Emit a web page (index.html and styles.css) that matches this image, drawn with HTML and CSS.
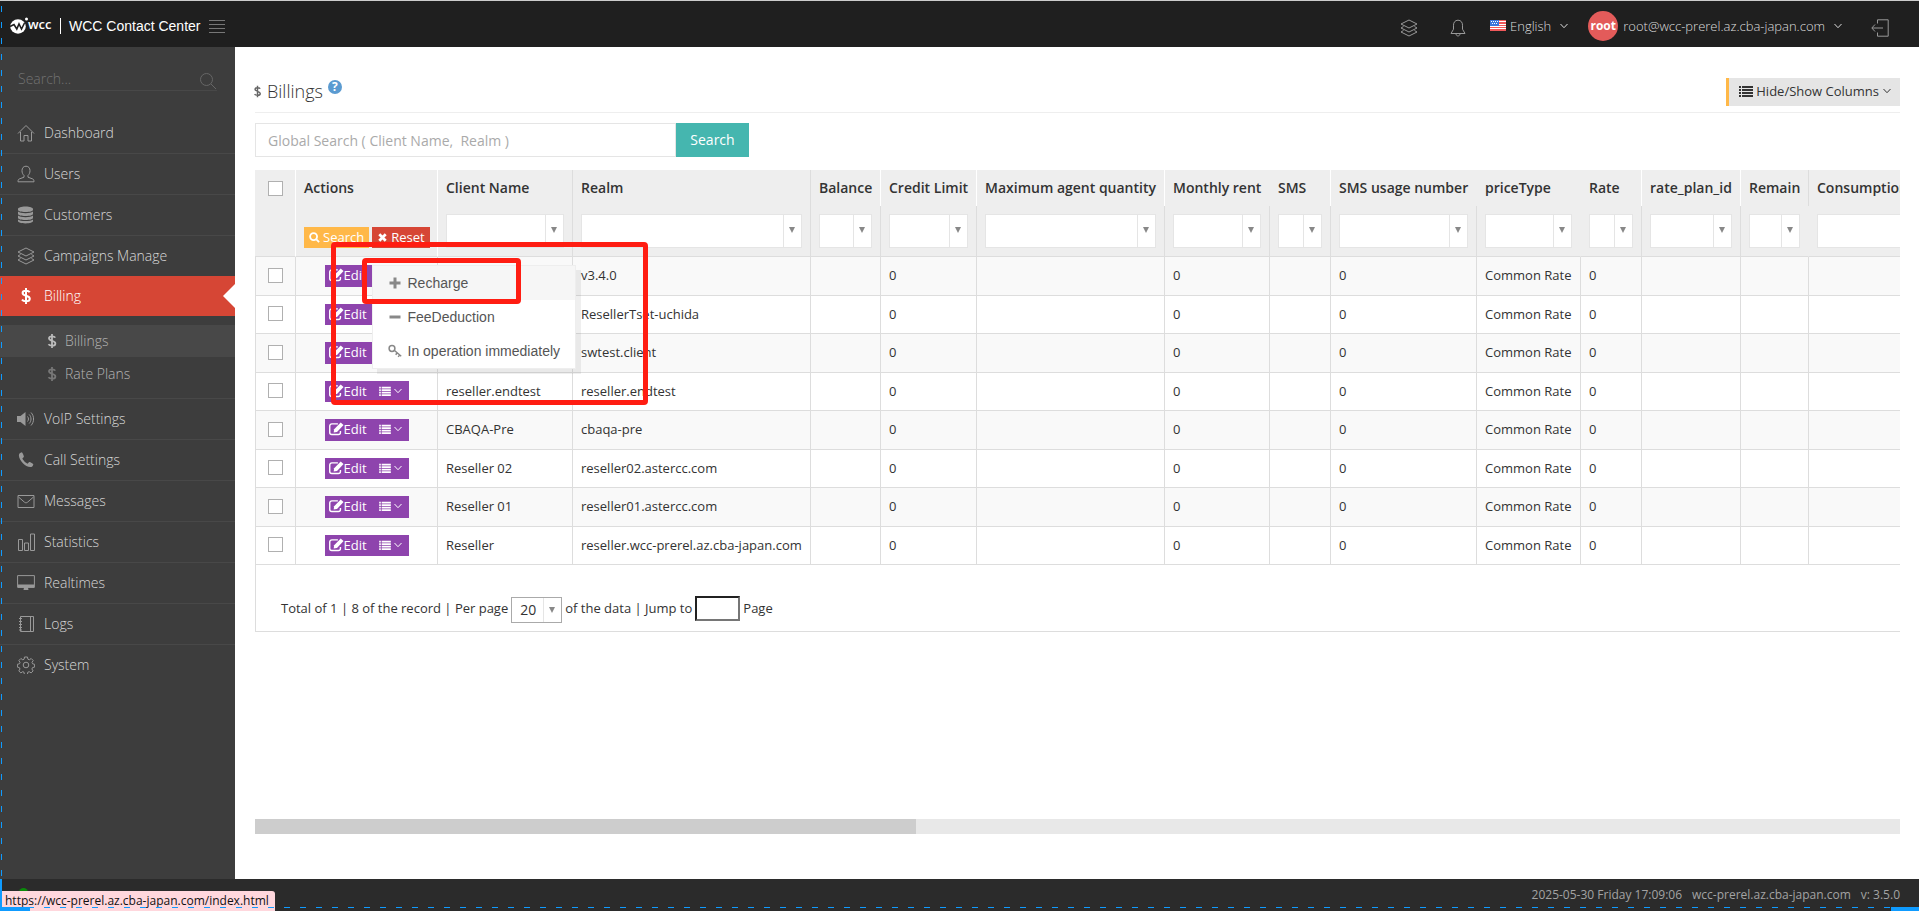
FILE: index.html
```html
<!DOCTYPE html>
<html lang="en">
<head>
  <meta charset="UTF-8">
  <meta name="viewport" content="width=device-width, initial-scale=1.0">
  <title>WCC Contact Center</title>
  <link rel="stylesheet" href="styles.css">
</head>
<body>
  <!-- icon set -->
  <svg class="icon-defs" aria-hidden="true">
    <symbol id="i-home" viewBox="0 0 18 18"><path class="line" d="M1 9.500 9 1.500l8 8M3.500 8v9h3.500v-5.500h4V17h3.500V8"/></symbol>
    <symbol id="i-user" viewBox="0 0 18 18"><path class="line" d="M9 1.200c-2.600 0-4 1.900-4 4.500 0 2 .8 3.700 2 4.700v1.800L2.200 14c-.9.400-1.200 1.200-1.200 2.800h16c0-1.600-.3-2.400-1.200-2.800L11 12.200v-1.800c1.200-1 2-2.700 2-4.700 0-2.600-1.400-4.500-4-4.500z"/></symbol>
    <symbol id="i-db" viewBox="0 0 18 18"><path d="M1 3c0-1.300 3-2.500 7.500-2.500S16 1.700 16 3v.8c0 1.300-3 2.300-7.500 2.300S1 5.100 1 3.800zM1 5.600c1.500 1.100 4 1.600 7.500 1.600s6-.5 7.500-1.600v2.200c0 1.300-3 2.300-7.500 2.300S1 9.100 1 7.800zM1 9.600c1.500 1.100 4 1.600 7.500 1.600s6-.5 7.500-1.600v2.200c0 1.300-3 2.300-7.500 2.300S1 13.100 1 11.800zM1 13.500c1.500 1.100 4 1.600 7.500 1.600s6-.5 7.500-1.600v1.600c0 1.300-3 2.400-7.500 2.400S1 16.400 1 15.100z"/></symbol>
    <symbol id="i-layers" viewBox="0 0 18 18"><path class="line" d="M9 1 1 5l8 4 8-4zM3.500 7.500 1 9l8 4 8-4-2.500-1.500M3.500 11.500 1 13l8 4 8-4-2.500-1.500"/></symbol>
    <symbol id="i-dollar" viewBox="0 0 18 18"><path class="thick" d="M9 1v16M12.700 5.200C12 4 10.700 3.700 9 3.700c-2.100 0-3.400.9-3.400 2.300 0 3.600 7.200 1.900 7.200 5.700 0 1.600-1.500 2.600-3.800 2.600-1.800 0-3.200-.5-4-1.600"/></symbol>
    <symbol id="i-sound" viewBox="0 0 18 18"><path d="M0 6h3.500L8.500 2v14l-5-4H0z"/><path class="line" d="M10.500 6.500c1.300 1.400 1.300 3.600 0 5M12.200 4.500c2.400 2.500 2.400 6.500 0 9M14 2.500c3.400 3.600 3.400 9.400 0 13"/></symbol>
    <symbol id="i-phone" viewBox="0 0 18 18"><path d="M4.700 1.300c-1.500.3-2.800 1.500-2.800 3.300 0 2.300 2 5.600 4 7.600s5 3.800 7.400 3.800c1.600 0 2.700-1 3-2.600 0-.5-3.400-2.400-3.900-2.300-.6.100-1.300 1.700-2 1.600-1.300-.3-4.800-3.900-5-5.100-.1-.6 1.400-1.200 1.500-1.900.1-.6-1.500-4.400-2.200-4.400z"/></symbol>
    <symbol id="i-mail" viewBox="0 0 18 18"><path class="line" d="M1 3.500h16v12H1zM1.500 5 7.500 10.200c1 .8 2 .8 3 0L16.500 5"/></symbol>
    <symbol id="i-stats" viewBox="0 0 18 18"><path class="line" d="M1.500 6.500h4v11h-4zM7.500 10h4v7.500h-4zM13.500 1h4v16.500h-4z"/></symbol>
    <symbol id="i-screen" viewBox="0 0 18 18"><path class="line" d="M.6 1.600h16.800v11.800H.6z"/><path d="M1 10.500h16v3H1zM7 13.500h4l.5 2.500H6.500z"/></symbol>
    <symbol id="i-book" viewBox="0 0 18 18"><path class="line" d="M3.500 1.500h13v15h-13zM13.500 1.500v15M2 3.500h3M2 6.500h3M2 9.500h3M2 12.500h3M2 15h3"/></symbol>
    <symbol id="i-gear" viewBox="0 0 18 18"><circle class="line" cx="9" cy="9" r="2.800"/><path class="line" d="M7.500 1h3l.4 2.200 1.400.6 1.900-1.300 2 2-1.200 1.900.6 1.400 2 .5v2.800l-2.100.5-.6 1.400 1.200 1.900-2 2-1.900-1.200-1.400.5-.4 2.300h-3l-.4-2.300-1.300-.5-1.900 1.200-2-2L3 13l-.6-1.400-2-.5V8.300l2.100-.5L3 6.400 1.900 4.500l2-2 1.900 1.300 1.300-.6z"/></symbol>
    <symbol id="i-search" viewBox="0 0 18 18"><circle class="line" cx="7.500" cy="7.500" r="6"/><path class="line" d="m12 12 5 5"/></symbol>
    <symbol id="i-bell" viewBox="0 0 18 18"><path class="line" d="M9 1.200c-3 0-4.500 2.300-4.500 5v4L2 14.500h14L13.500 10.200v-4c0-2.700-1.500-5-4.500-5zM7 15c.2 2.600 3.800 2.600 4 0"/></symbol>
    <symbol id="i-logout" viewBox="0 0 18 18"><path class="line" d="M6.500 4.500V.8h10.700v16.400H6.500v-3.700M12 9H1M4 5.500.8 9 4 12.500"/></symbol>
    <symbol id="i-chevron" viewBox="0 0 10 10"><path class="line" d="m1.500 3 3.500 3.700L8.500 3"/></symbol>
    <symbol id="i-list" viewBox="0 0 14 12"><path d="M0 1h2v2H0zM0 4h2v2H0zM0 7h2v2H0zM0 10h2v2H0zM3 1h11v2H3zM3 4h11v2H3zM3 7h11v2H3zM3 10h11v2H3z"/></symbol>
    <symbol id="i-edit" viewBox="0 0 16 14"><path class="bold-line" d="M9.500 1.500H3A2.200 2.200 0 0 0 .8 3.700v7A2.200 2.200 0 0 0 3 12.900h7a2.200 2.200 0 0 0 2.200-2.200V9"/><path d="m12.500 0 3 2.700-7 7.500-3.500.6.500-3.600z"/></symbol>
    <symbol id="i-find" viewBox="0 0 12 12"><circle class="thick" cx="5" cy="5" r="3.800"/><path class="thick" d="m8 8 3 3"/></symbol>
    <symbol id="i-times" viewBox="0 0 12 12"><path class="heavy" d="m2.500 2.500 7 7M9.500 2.500l-7 7"/></symbol>
    <symbol id="i-plus" viewBox="0 0 14 14"><path class="heavy" d="M7 1.500v11M1.500 7h11"/></symbol>
    <symbol id="i-minus" viewBox="0 0 14 14"><path class="heavy" d="M1.500 7h11"/></symbol>
    <symbol id="i-key" viewBox="0 0 14 14"><circle class="bold-line" cx="4" cy="4.500" r="2.900"/><path class="bold-line" d="m6.200 6.200 7 6M9.200 8.800l-1.500 2M11.700 10.900l-1.500 2"/></symbol>
  </svg>

  <header class="topbar">
    <a class="brand" href="#">
      <svg class="logo" viewBox="0 0 44 18" aria-label="wcc">
        <ellipse cx="8" cy="9.500" rx="7.800" ry="7.200"/>
        <circle cx="16.500" cy="2" r="1.500"/>
        <path class="cut" d="M0 9.500 4 7.500l2.800 4.500 2.200-5 2.500 5 3-6"/>
        <text x="18" y="12">wcc</text>
      </svg>
      <span class="brand-name">WCC Contact Center</span>
    </a>
    <button class="menu-toggle" aria-label="Toggle menu"><i></i><i></i><i></i><i></i></button>
    <nav class="topnav">
      <a class="nav-icon" href="#" aria-label="Layers"><svg><use href="#i-layers"/></svg></a>
      <a class="nav-icon" href="#" aria-label="Notifications"><svg><use href="#i-bell"/></svg></a>
      <a class="lang" href="#">
        <svg class="flag" viewBox="0 0 16 11"><path fill="#fff" d="M0 0h16v11H0z"/><path fill="#f0585a" d="M0 0h16v1H0zM0 2h16v2H0zM0 5h16v1H0zM0 7h16v1H0zM0 9h16v2H0z"/><path fill="#3a76dc" d="M0 0h9v6H0z"/><path fill="#fff" d="M1 1h1v1H1zM3 1h1v1H3zM5 1h1v1H5zM7 1h1v1H7zM2 3h1v1H2zM4 3h1v1H4zM6 3h1v1H6z"/></svg>
        <span>English</span><svg class="chevron"><use href="#i-chevron"/></svg>
      </a>
      <a class="account" href="#"><span class="avatar">root</span><span>root@wcc-prerel.az.cba-japan.com</span><svg class="chevron"><use href="#i-chevron"/></svg></a>
      <a class="nav-icon" href="#" aria-label="Log out"><svg><use href="#i-logout"/></svg></a>
    </nav>
  </header>

  <div class="page">
    <aside class="sidebar">
      <form class="side-search">
        <input type="text" placeholder="Search..." aria-label="Search menu">
        <button type="submit" aria-label="Search"><svg><use href="#i-search"/></svg></button>
      </form>
      <ul class="menu">
        <li><a href="#"><svg><use href="#i-home"/></svg>Dashboard</a></li>
        <li><a href="#"><svg><use href="#i-user"/></svg>Users</a></li>
        <li><a href="#"><svg><use href="#i-db"/></svg>Customers</a></li>
        <li><a href="#"><svg><use href="#i-layers"/></svg>Campaigns Manage</a></li>
        <li class="active">
          <a href="#"><svg><use href="#i-dollar"/></svg>Billing</a>
          <ul class="submenu">
            <li class="current"><a href="#"><svg><use href="#i-dollar"/></svg>Billings</a></li>
            <li><a href="#"><svg><use href="#i-dollar"/></svg>Rate Plans</a></li>
          </ul>
        </li>
        <li><a href="#"><svg><use href="#i-sound"/></svg>VoIP Settings</a></li>
        <li><a href="#"><svg><use href="#i-phone"/></svg>Call Settings</a></li>
        <li><a href="#"><svg><use href="#i-mail"/></svg>Messages</a></li>
        <li><a href="#"><svg><use href="#i-stats"/></svg>Statistics</a></li>
        <li><a href="#"><svg><use href="#i-screen"/></svg>Realtimes</a></li>
        <li><a href="#"><svg><use href="#i-book"/></svg>Logs</a></li>
        <li><a href="#"><svg><use href="#i-gear"/></svg>System</a></li>
      </ul>
    </aside>

    <main class="content">
      <div class="page-head">
        <h1><svg><use href="#i-dollar"/></svg>Billings<a class="help" href="#" aria-label="Help">?</a></h1>
        <button class="columns-btn"><svg class="list"><use href="#i-list"/></svg>Hide/Show Columns<svg class="chevron"><use href="#i-chevron"/></svg></button>
      </div>

      <form class="global-search">
        <input type="text" placeholder="Global Search ( Client Name,&nbsp; Realm )" aria-label="Global search">
        <button type="submit">Search</button>
      </form>

      <div class="table-wrap">
        <table class="grid">
          <colgroup><col class="c-check"><col class="c-actions"><col class="c-client"><col class="c-realm"><col class="c-balance"><col class="c-credit"><col class="c-agents"><col class="c-rent"><col class="c-sms"><col class="c-usage"><col class="c-price"><col class="c-rate"><col class="c-plan"><col class="c-remain"><col class="c-used"></colgroup>
          <thead>
            <tr class="titles">
              <th rowspan="2" class="check white"><input type="checkbox" aria-label="Select all"></th>
              <th class="white">Actions</th>
              <th>Client Name</th>
              <th>Realm</th>
              <th class="white">Balance</th>
              <th class="white">Credit Limit</th>
              <th class="white">Maximum agent quantity</th>
              <th class="plain">Monthly rent</th>
              <th class="white">SMS</th>
              <th class="plain">SMS usage number</th>
              <th class="plain">priceType</th>
              <th class="white">Rate</th>
              <th class="white">rate_plan_id</th>
              <th>Remain</th>
              <th>Consumption</th>
            </tr>
            <tr class="filters">
              <th class="white"><div class="filter-actions"><button class="find"><svg><use href="#i-find"/></svg>Search</button><button class="reset"><svg><use href="#i-times"/></svg>Reset</button></div></th>
              <th><select aria-label="Client Name"><option></option></select></th>
              <th><select aria-label="Realm"><option></option></select></th>
              <th><select aria-label="Balance"><option></option></select></th>
              <th><select aria-label="Credit Limit"><option></option></select></th>
              <th><select aria-label="Maximum agent quantity"><option></option></select></th>
              <th><select aria-label="Monthly rent"><option></option></select></th>
              <th><select aria-label="SMS"><option></option></select></th>
              <th><select aria-label="SMS usage number"><option></option></select></th>
              <th class="plain"><select aria-label="priceType"><option></option></select></th>
              <th><select aria-label="Rate"><option></option></select></th>
              <th><select aria-label="rate_plan_id"><option></option></select></th>
              <th class="plain"><select aria-label="Remain"><option></option></select></th>
              <th><select aria-label="Consumption"><option></option></select></th>
            </tr>
          </thead>
          <tbody>
            <tr>
              <td class="check"><input type="checkbox" aria-label="Select row"></td>
              <td class="actions">
                <div class="btn-group">
                  <button class="edit"><svg><use href="#i-edit"/></svg>Edit</button><button class="more" aria-label="More"><svg class="list"><use href="#i-list"/></svg><svg class="chevron"><use href="#i-chevron"/></svg></button>
                  <ul class="dropdown">
                    <li class="hover"><a href="#"><svg><use href="#i-plus"/></svg>Recharge</a></li>
                    <li><a href="#"><svg><use href="#i-minus"/></svg>FeeDeduction</a></li>
                    <li><a href="#"><svg><use href="#i-key"/></svg>In operation immediately</a></li>
                  </ul>
                  <span class="mark mark-area"></span>
                  <span class="mark mark-item"></span>
                </div>
              </td>
              <td></td><td>v3.4.0</td><td></td><td>0</td><td></td><td>0</td><td></td><td>0</td><td>Common Rate</td><td>0</td><td></td><td></td><td></td>
            </tr>
            <tr>
              <td class="check"><input type="checkbox" aria-label="Select row"></td>
              <td class="actions"><div class="btn-group"><button class="edit"><svg><use href="#i-edit"/></svg>Edit</button><button class="more" aria-label="More"><svg class="list"><use href="#i-list"/></svg><svg class="chevron"><use href="#i-chevron"/></svg></button></div></td>
              <td></td><td>ResellerTset-uchida</td><td></td><td>0</td><td></td><td>0</td><td></td><td>0</td><td>Common Rate</td><td>0</td><td></td><td></td><td></td>
            </tr>
            <tr>
              <td class="check"><input type="checkbox" aria-label="Select row"></td>
              <td class="actions"><div class="btn-group"><button class="edit"><svg><use href="#i-edit"/></svg>Edit</button><button class="more" aria-label="More"><svg class="list"><use href="#i-list"/></svg><svg class="chevron"><use href="#i-chevron"/></svg></button></div></td>
              <td></td><td>swtest.client</td><td></td><td>0</td><td></td><td>0</td><td></td><td>0</td><td>Common Rate</td><td>0</td><td></td><td></td><td></td>
            </tr>
            <tr>
              <td class="check"><input type="checkbox" aria-label="Select row"></td>
              <td class="actions"><div class="btn-group"><button class="edit"><svg><use href="#i-edit"/></svg>Edit</button><button class="more" aria-label="More"><svg class="list"><use href="#i-list"/></svg><svg class="chevron"><use href="#i-chevron"/></svg></button></div></td>
              <td>reseller.endtest</td><td>reseller.endtest</td><td></td><td>0</td><td></td><td>0</td><td></td><td>0</td><td>Common Rate</td><td>0</td><td></td><td></td><td></td>
            </tr>
            <tr>
              <td class="check"><input type="checkbox" aria-label="Select row"></td>
              <td class="actions"><div class="btn-group"><button class="edit"><svg><use href="#i-edit"/></svg>Edit</button><button class="more" aria-label="More"><svg class="list"><use href="#i-list"/></svg><svg class="chevron"><use href="#i-chevron"/></svg></button></div></td>
              <td>CBAQA-Pre</td><td>cbaqa-pre</td><td></td><td>0</td><td></td><td>0</td><td></td><td>0</td><td>Common Rate</td><td>0</td><td></td><td></td><td></td>
            </tr>
            <tr>
              <td class="check"><input type="checkbox" aria-label="Select row"></td>
              <td class="actions"><div class="btn-group"><button class="edit"><svg><use href="#i-edit"/></svg>Edit</button><button class="more" aria-label="More"><svg class="list"><use href="#i-list"/></svg><svg class="chevron"><use href="#i-chevron"/></svg></button></div></td>
              <td>Reseller 02</td><td>reseller02.astercc.com</td><td></td><td>0</td><td></td><td>0</td><td></td><td>0</td><td>Common Rate</td><td>0</td><td></td><td></td><td></td>
            </tr>
            <tr>
              <td class="check"><input type="checkbox" aria-label="Select row"></td>
              <td class="actions"><div class="btn-group"><button class="edit"><svg><use href="#i-edit"/></svg>Edit</button><button class="more" aria-label="More"><svg class="list"><use href="#i-list"/></svg><svg class="chevron"><use href="#i-chevron"/></svg></button></div></td>
              <td>Reseller 01</td><td>reseller01.astercc.com</td><td></td><td>0</td><td></td><td>0</td><td></td><td>0</td><td>Common Rate</td><td>0</td><td></td><td></td><td></td>
            </tr>
            <tr>
              <td class="check"><input type="checkbox" aria-label="Select row"></td>
              <td class="actions"><div class="btn-group"><button class="edit"><svg><use href="#i-edit"/></svg>Edit</button><button class="more" aria-label="More"><svg class="list"><use href="#i-list"/></svg><svg class="chevron"><use href="#i-chevron"/></svg></button></div></td>
              <td>Reseller</td><td>reseller.wcc-prerel.az.cba-japan.com</td><td></td><td>0</td><td></td><td>0</td><td></td><td>0</td><td>Common Rate</td><td>0</td><td></td><td></td><td></td>
            </tr>
          </tbody>
        </table>
        <div class="pager">
          <label for="per-page">Total of 1 | 8 of the record | Per page</label>
          <select id="per-page"><option>20</option></select>
          <label for="jump">of the data | Jump to</label>
          <input type="text" id="jump">
          <span>Page</span>
        </div>
      </div>
      <div class="hscroll"><div class="hscroll-thumb"></div></div>
    </main>
  </div>

  <footer class="footer">
    <span>2025-05-30 Friday 17:09:06</span>
    <span>wcc-prerel.az.cba-japan.com</span>
    <span>v: 3.5.0</span>
    <i class="online"></i>
    <span class="link-status">https://wcc-prerel.az.cba-japan.com/index.html</span>
    <i class="edge edge-left"></i>
    <i class="edge edge-corner"></i>
    <i class="edge edge-right"></i>
  </footer>

  <div class="guide guide-left"></div>
  <div class="guide guide-bottom"></div>
</body>
</html>
```
FILE: styles.css
```css
* {
  box-sizing: border-box;
}
body {
  margin: 0;
  min-height: 100vh;
  display: flex;
  flex-direction: column;
  font-family: "Open Sans", sans-serif;
  font-size: 13px;
  line-height: 20px;
  color: #333;
  background-color: #3d3d3d;
  overflow: hidden;
}
a {
  color: inherit;
  text-decoration: none;
}
ul {
  list-style: none;
  margin: 0;
  padding: 0;
}
button,
input,
select {
  font: inherit;
  color: inherit;
  margin: 0;
  border-radius: 0;
}
button {
  border: none;
  padding: 0;
  background: none;
  cursor: pointer;
}

/* icons */
.icon-defs {
  display: none;
}
svg {
  width: 18px;
  height: 18px;
  fill: currentColor;
  flex: none;
}
.line,
.bold-line,
.thick,
.heavy {
  fill: none;
  stroke: currentColor;
  stroke-width: 1;
}
.bold-line {
  stroke-width: 1.5;
}
.thick {
  stroke-width: 2;
}
.heavy {
  stroke-width: 3;
}
.chevron {
  width: 10px;
  height: 10px;
}

/* top bar */
.topbar {
  display: flex;
  align-items: center;
  height: 47px;
  padding: 0 30px 0 10px;
  background-color: #1f1f1f;
  border-top: 1px solid #ccc;
}
.brand {
  display: flex;
  align-items: center;
  padding-top: 4px;
  color: #fff;
  font: 14px/16px "Liberation Sans", Arial, sans-serif;
}
.logo {
  width: 44px;
  height: 18px;
  margin-right: 6px;
}
.logo text {
  font: 600 13px "Open Sans", sans-serif;
}
.logo .cut {
  fill: none;
  stroke: #1f1f1f;
  stroke-width: 1.6;
}
.brand-name {
  padding-left: 8px;
  border-left: 1px solid #fff;
}
.menu-toggle {
  display: flex;
  flex-direction: column;
  gap: 3px;
  width: 16px;
  margin: 5px 0 0 9px;
}
.menu-toggle i {
  height: 1px;
  background-color: #777;
}
.topnav {
  display: flex;
  align-items: center;
  margin-left: auto;
  padding-top: 3px;
  color: #ddd;
  font-weight: 300;
}
.topnav > a {
  display: flex;
  align-items: center;
}
.topnav > .nav-icon {
  padding-top: 4px;
  color: #999;
}
.nav-icon + .nav-icon {
  margin-left: 31px;
}
.lang {
  margin-left: 23px;
}
.flag {
  width: 16px;
  height: 11px;
  margin-right: 4px;
}
.lang .chevron,
.account .chevron {
  margin-left: 8px;
}
.account {
  margin: 0 28px 0 19px;
}
.avatar {
  width: 30px;
  height: 30px;
  margin-right: 5px;
  border-radius: 50%;
  background-color: #e35b5a;
  color: #fff;
  font-size: 12px;
  font-weight: 700;
  line-height: 30px;
  text-align: center;
}

/* sidebar */
.page {
  flex: 1;
  display: flex;
}
.sidebar {
  flex: 0 0 235px;
  color: #d8d8d8;
  background-color: #3d3d3d;
}
.side-search {
  display: flex;
  align-items: flex-end;
  margin: 22px 18px 22px;
  border-bottom: 1px solid #484848;
}
.side-search input {
  flex: 1;
  min-width: 0;
  padding: 0 0 1px;
  border: none;
  background: none;
  font-size: 14px;
  font-weight: 300;
}
.side-search input::placeholder {
  color: #727272;
}
.side-search button {
  height: 18px;
  color: #666;
}
.menu {
  font-size: 14px;
  font-weight: 300;
}
.menu > li + li {
  border-top: 1px solid #484848;
}
.menu > li > a {
  position: relative;
  display: flex;
  align-items: center;
  gap: 9px;
  height: 40px;
  padding-left: 17px;
}
.menu svg {
  color: #999;
}
.menu > li.active {
  border-top: none;
}
.active > a {
  background-color: #d64635;
  color: #fff;
}
.active > a svg {
  color: #fff;
}
/* notch pointing into the page */
.active > a::after {
  content: "";
  position: absolute;
  right: 0;
  top: 8px;
  border: 12px solid transparent;
  border-left: none;
  border-right-color: #fff;
}
.submenu {
  padding: 9px 0 8px;
}
.submenu li + li {
  margin-top: 1px;
}
.submenu a {
  display: flex;
  align-items: center;
  gap: 5px;
  height: 32px;
  padding-left: 44px;
  color: #b4b4b4;
}
.submenu svg {
  width: 16px;
  height: 16px;
  color: #777;
}
.submenu .current {
  background-color: #484848;
}
.submenu .current svg {
  color: #bbb;
}

/* content */
.content {
  flex: 1;
  min-width: 0;
  display: flex;
  flex-direction: column;
  padding: 31px 19px 45px 20px;
  background-color: #fff;
}
.page-head {
  display: flex;
  justify-content: space-between;
  align-items: flex-start;
  height: 35px;
  border-bottom: 1px solid #eee;
}
h1 {
  display: flex;
  align-items: center;
  margin: 0;
  font-size: 18px;
  font-weight: 300;
  line-height: 26px;
}
h1 svg {
  width: 13px;
  height: 13px;
  margin: 0 3px 0 -4px;
  color: #666;
}
.help {
  align-self: flex-start;
  width: 14px;
  height: 14px;
  margin: 2px 0 0 5px;
  border-radius: 50%;
  background-color: #5b9bd1;
  color: #fff;
  font-size: 12px;
  font-weight: 700;
  line-height: 14px;
  text-align: center;
}
.columns-btn {
  display: flex;
  align-items: center;
  height: 28px;
  padding: 0 8px 2px 10px;
  border-left: 3px solid #ffb848;
  background-color: #e5e5e5;
}
.columns-btn .list {
  width: 14px;
  height: 12px;
  margin-right: 3px;
}
.columns-btn .chevron {
  margin-left: 3px;
}
.global-search {
  display: flex;
  margin: 10px 0 13px;
}
.global-search input {
  width: 421px;
  height: 34px;
  padding: 0 12px;
  border: 1px solid #e5e5e5;
  font-size: 14px;
}
.global-search input::placeholder {
  color: #aaa;
}
.global-search button {
  width: 73px;
  background-color: #45b6af;
  color: #fff;
  font-size: 14px;
}

/* table */
.table-wrap {
  flex: 1;
  overflow: hidden;
}
.grid {
  table-layout: fixed;
  width: 1720px;
  border-collapse: separate;
  border-spacing: 0;
}
.c-check { width: 41px; }
.c-actions { width: 142px; }
.c-client { width: 135px; }
.c-realm { width: 238px; }
.c-balance { width: 70px; }
.c-credit { width: 96px; }
.c-agents { width: 188px; }
.c-rent { width: 105px; }
.c-sms { width: 61px; }
.c-usage { width: 146px; }
.c-price { width: 104px; }
.c-rate { width: 61px; }
.c-plan { width: 99px; }
.c-remain { width: 68px; }
.grid th,
.grid td {
  padding: 0 8px;
  border-right: 1px solid #ddd;
  border-bottom: 1px solid #ddd;
  text-align: left;
  white-space: nowrap;
}
.grid th {
  background-color: #eee;
  font-size: 14px;
  font-weight: 600;
}
.grid th.white {
  border-right-color: #fff;
}
.grid th.plain {
  border-right-color: #eee;
}
.titles th {
  height: 36px;
}
.titles th:not(.check) {
  border-bottom: none;
}
.filters th {
  height: 51px;
}
.grid td {
  height: 38px;
  padding-bottom: 2px;
}
.grid tbody tr:nth-child(odd) td {
  height: 39px;
  background-color: #f9f9f9;
}
.grid td.actions {
  padding-bottom: 0;
}
.grid .check {
  padding: 0 0 2px;
  text-align: center;
}
.grid th.check {
  padding-top: 11px;
  vertical-align: top;
}
.grid td.check {
  border-left: 1px solid #ddd;
}
.check input {
  appearance: none;
  display: block;
  width: 15px;
  height: 15px;
  margin: 0 auto;
  border: 1px solid #b0b0b0;
  background-color: #fff;
}
.grid select,
.pager select {
  appearance: none;
  display: block;
  width: 100%;
  height: 34px;
  border: 1px solid #e5e5e5;
  background-color: #fff;
  background-image:
    url("data:image/svg+xml,%3Csvg xmlns='http://www.w3.org/2000/svg' width='6' height='6'%3E%3Cpath fill='%23888' d='M0 0h6L3 6z'/%3E%3C/svg%3E"),
    linear-gradient(#e5e5e5, #e5e5e5);
  background-position: right 6px top 12px, right 17px top;
  background-size: 6px 6px, 1px 100%;
  background-repeat: no-repeat;
}
.filter-actions {
  display: flex;
  gap: 3px;
  padding-top: 13px;
}
.filter-actions button {
  display: flex;
  align-items: center;
  gap: 3px;
  height: 21px;
  padding: 0 5px 1px;
  color: #fff;
  font-size: 13px;
  font-weight: 400;
}
.filter-actions svg {
  width: 11px;
  height: 11px;
}
.find {
  background-color: #ffb848;
}
.reset {
  background-color: #d64635;
}

/* row buttons */
.btn-group {
  position: relative;
  display: flex;
  width: 84px;
  margin: 0 auto;
}
.btn-group button {
  display: flex;
  align-items: center;
  height: 22px;
  padding: 0 4px 2px;
  background-color: #8e44ad;
  color: #fff;
}
.grid tbody tr:nth-child(even) button {
  height: 21px;
}
.edit svg {
  width: 15px;
  height: 14px;
}
.btn-group .more {
  flex: 1;
  padding-left: 8px;
}
.more .list {
  width: 12px;
  height: 10px;
  margin-right: 2px;
}
.dropdown {
  position: absolute;
  top: 0;
  left: 47px;
  z-index: 5;
  width: 204px;
  border: 1px solid #eee;
  background-color: #fff;
  box-shadow: 5px 5px rgba(102, 102, 102, 0.1);
  color: #555;
  font: 14px/20px "Liberation Sans", Arial, sans-serif;
}
.dropdown a {
  display: flex;
  align-items: center;
  gap: 6px;
  height: 34px;
  padding-left: 15px;
}
.dropdown svg {
  width: 14px;
  height: 14px;
  color: #888;
}
.dropdown .hover {
  background-color: #f6f6f6;
}

/* red highlight frames */
.mark {
  position: absolute;
  z-index: 6;
  border: 5px solid #ff1d12;
  border-radius: 4px;
}
.mark-area {
  top: -23px;
  left: 6px;
  width: 317px;
  height: 163px;
}
.mark-item {
  top: -7px;
  left: 37px;
  width: 159px;
  height: 46px;
}

.pager {
  display: flex;
  align-items: center;
  gap: 3px;
  height: 67px;
  padding: 20px 0 0 25px;
  border-left: 1px solid #ddd;
  border-bottom: 1px solid #ddd;
}
.pager select {
  width: 51px;
  height: 26px;
  margin-top: 3px;
  padding: 0 8px;
  border-color: #aaa;
  background-position: right 6px center, right 17px top;
  font-size: 14px;
}
.pager input {
  width: 45px;
  height: 25px;
  border: 2px inset #767676;
}

/* horizontal scroll */
.hscroll {
  height: 15px;
  background-color: #e8e8e8;
}
.hscroll-thumb {
  width: 40.2%;
  height: 100%;
  background-color: #cdcdcd;
}

/* footer */
.footer {
  position: relative;
  display: flex;
  justify-content: flex-end;
  gap: 10px;
  height: 32px;
  padding: 6px 19px 0;
  background-color: #2b2b2b;
  color: #a3a3a3;
  font-size: 12px;
}
.online {
  position: absolute;
  left: 19px;
  top: 9px;
  width: 9px;
  height: 9px;
  border-radius: 50%;
  background-color: #0a8a0a;
}
.link-status {
  position: absolute;
  left: 2px;
  bottom: 0;
  height: 20px;
  padding: 0 6px 0 3px;
  border-top-right-radius: 3px;
  background-color: #ffd7dd;
  color: #111;
  font-size: 12px;
}
.edge {
  position: absolute;
  bottom: 0;
  background-color: #0f9bff;
}
.edge-left {
  left: 0;
  width: 2px;
  height: 32px;
}
.edge-corner {
  left: 0;
  width: 30px;
  height: 4px;
}
.edge-right {
  right: 0;
  width: 28px;
  height: 4px;
}

/* dashed guides along the window edges */
.guide {
  position: fixed;
  z-index: 10;
}
.guide-left {
  left: 1px;
  top: 6px;
  bottom: 32px;
  width: 1px;
  background: repeating-linear-gradient(to bottom, #0f9bff 0 6px, transparent 6px 16px);
}
.guide-bottom {
  left: 28px;
  right: 28px;
  bottom: 3px;
  height: 1px;
  background: repeating-linear-gradient(to right, #0f9bff 0 6px, transparent 6px 16px);
}
```
